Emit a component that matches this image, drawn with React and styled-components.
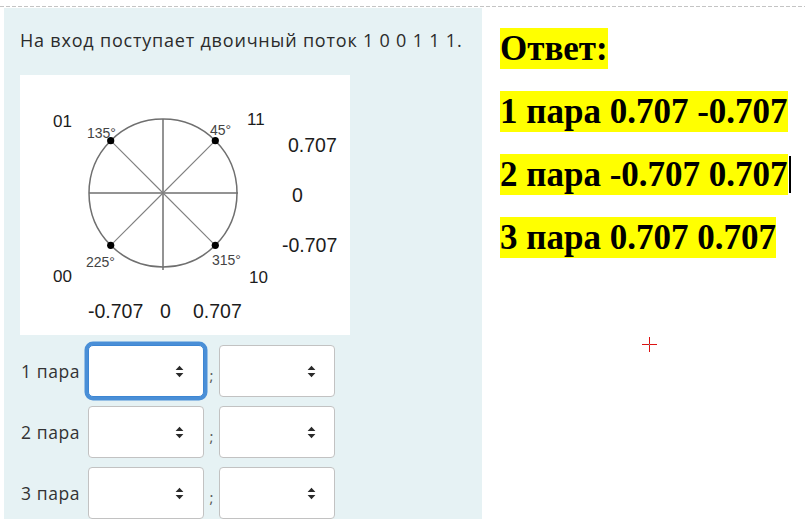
import React from "react";
import styled, { createGlobalStyle } from "styled-components";

const Global = createGlobalStyle`
  html, body { margin: 0; padding: 0; background: #ffffff; }
  body { width: 805px; height: 523px; overflow: hidden; }
`;

const Page = styled.div`
  width: 805px;
  height: 523px;
  display: flex;
  flex-direction: column;
  position: relative;
`;

const DashedRule = styled.div`
  margin-top: 6px;
  height: 1px;
  background: repeating-linear-gradient(to right, #c4c4c4 0 4px, transparent 4px 6px);
`;

const Body = styled.div`
  display: flex;
  margin-top: 1px;
`;

const QuestionPanel = styled.div`
  margin-left: 4px;
  width: 478px;
  height: 511px;
  background: #e6f2f4;
  box-sizing: border-box;
  padding: 20px 0 0 16px;
  overflow: hidden;
  font-family: "Open Sans", "Liberation Sans", sans-serif;
  color: #2b2b2b;
`;

const Question = styled.div`
  font-size: 18px;
  line-height: 24px;
  letter-spacing: 0.8px;
  white-space: nowrap;
`;

const Figure = styled.svg`
  display: block;
  margin-top: 23px;
  width: 330px;
  height: 260px;
  background: #ffffff;
`;

const FigureLabel = styled.text`
  font-family: "Liberation Sans", Arial, sans-serif;
  font-size: ${p => p.$size}px;
  fill: ${p => (p.$muted ? "#444" : "#1c1c1c")};
`;

const Rows = styled.div`
  display: flex;
  flex-direction: column;
  gap: 9px;
  margin-top: 10px;
`;

const Row = styled.div`
  display: flex;
  align-items: center;
`;

const RowLabel = styled.span`
  width: 68px;
  font-size: 17.5px;
  letter-spacing: 0.6px;
  color: #333;
  padding-left: 1px;
  box-sizing: border-box;
  white-space: nowrap;
`;

const SelectBox = styled.div`
  width: 116px;
  height: 52px;
  box-sizing: border-box;
  background: #fff;
  border: 1px solid ${p => (p.$focused ? "#3d86d3" : "#c2c2c2")};
  border-radius: ${p => (p.$focused ? "5px" : "4px")};
  box-shadow: ${p => (p.$focused ? "0 0 0 3.5px #4a8fd7" : "none")};
  display: flex;
  align-items: center;
  justify-content: flex-end;
  padding-right: ${p => (p.$narrow ? "18px" : "19px")};
`;

const Sep = styled.span`
  width: 15px;
  text-align: center;
  font-size: 15px;
  color: #555;
  padding-top: 8px;
`;

const AnswerPanel = styled.div`
  flex: 1;
  padding: 20px 0 0 18px;
  font-family: "Liberation Serif", "Times New Roman", serif;
  font-weight: bold;
  font-size: 35px;
  color: #000;
`;

const AnswerLine = styled.div`
  height: 41px;
  margin-bottom: 22px;
  display: flex;
  align-items: center;
`;

const Mark = styled.span`
  background: #ffff00;
  line-height: 41px;
  height: 41px;
  display: inline-block;
  white-space: pre;
`;

const Caret = styled.span`
  display: inline-block;
  width: 2px;
  height: 37px;
  background: #000;
  margin-left: 1px;
`;

const Crosshair = styled.svg`
  position: absolute;
  left: 642px;
  top: 337px;
  width: 15px;
  height: 15px;
`;

function SortIcon() {
  return (
    <svg width="9" height="13" viewBox="0 0 9 13">
      <path d="M4.5 0.8 L8.4 5 L0.6 5 Z" fill="#2a2a2a" />
      <path d="M4.5 12.2 L8.4 8 L0.6 8 Z" fill="#2a2a2a" />
    </svg>
  );
}

const labels = [
  { x: 33, y: 52, s: 17, t: "01" },
  { x: 227, y: 50, s: 17, t: "11" },
  { x: 33, y: 207, s: 17, t: "00" },
  { x: 229, y: 208, s: 17, t: "10" },
  { x: 67, y: 63, s: 14, t: "135°", m: true },
  { x: 190, y: 60, s: 14, t: "45°", m: true },
  { x: 66, y: 192, s: 14, t: "225°", m: true },
  { x: 192, y: 190, s: 14, t: "315°", m: true },
  { x: 268, y: 77, s: 19.5, t: "0.707" },
  { x: 272, y: 127, s: 19.5, t: "0" },
  { x: 262, y: 177, s: 19.5, t: "-0.707" },
  { x: 68, y: 243, s: 19.5, t: "-0.707" },
  { x: 140, y: 243, s: 19.5, t: "0" },
  { x: 173, y: 243, s: 19.5, t: "0.707" },
];

function Diagram() {
  const cx = 143;
  const cy = 118;
  const r = 74;
  const d = 52.3;
  const dots = [
    [cx + d, cy - d],
    [cx - d, cy - d],
    [cx - d, cy + d],
    [cx + d, cy + d],
  ];
  return (
    <Figure viewBox="0 0 330 260">
      <circle cx={cx} cy={cy} r={r} fill="none" stroke="#6f6f6f" strokeWidth="1.5" />
      <line x1={cx - r} y1={cy} x2={cx + r + 1} y2={cy} stroke="#6f6f6f" strokeWidth="1.5" />
      <line x1={cx} y1={cy - r} x2={cx} y2={cy + r + 3} stroke="#6f6f6f" strokeWidth="1.5" />
      {dots.map(([x, y], i) => (
        <line key={"l" + i} x1={cx} y1={cy} x2={x} y2={y} stroke="#808080" strokeWidth="1.1" />
      ))}
      {dots.map(([x, y], i) => (
        <circle key={"d" + i} cx={x} cy={y} r="3.6" fill="#000" />
      ))}
      {labels.map(l => (
        <FigureLabel key={l.t + l.x + l.y} x={l.x} y={l.y} $size={l.s} $muted={l.m}>
          {l.t}
        </FigureLabel>
      ))}
    </Figure>
  );
}

const pairs = ["1 пара", "2 пара", "3 пара"];

export default function App() {
  return (
    <Page>
      <Global />
      <DashedRule />
      <Body>
        <QuestionPanel>
          <Question>На вход поступает двоичный поток 1 0 0 1 1 1.</Question>
          <Diagram />
          <Rows>
            {pairs.map((p, i) => (
              <Row key={p}>
                <RowLabel>{p}</RowLabel>
                <SelectBox $focused={i === 0}>
                  <SortIcon />
                </SelectBox>
                <Sep>;</Sep>
                <SelectBox $narrow>
                  <SortIcon />
                </SelectBox>
              </Row>
            ))}
          </Rows>
        </QuestionPanel>
        <AnswerPanel>
          <AnswerLine><Mark>Ответ:</Mark></AnswerLine>
          <AnswerLine><Mark>1 пара 0.707 -0.707</Mark></AnswerLine>
          <AnswerLine><Mark>2 пара -0.707 0.707</Mark><Caret /></AnswerLine>
          <AnswerLine><Mark>3 пара 0.707 0.707</Mark></AnswerLine>
        </AnswerPanel>
      </Body>
      <Crosshair viewBox="0 0 15 15">
        <line x1="0" y1="7.5" x2="15" y2="7.5" stroke="#d11" strokeWidth="1" />
        <line x1="7.5" y1="0" x2="7.5" y2="15" stroke="#d11" strokeWidth="1" />
        <rect x="7" y="7" width="1" height="1" fill="#2cc" />
      </Crosshair>
    </Page>
  );
}
